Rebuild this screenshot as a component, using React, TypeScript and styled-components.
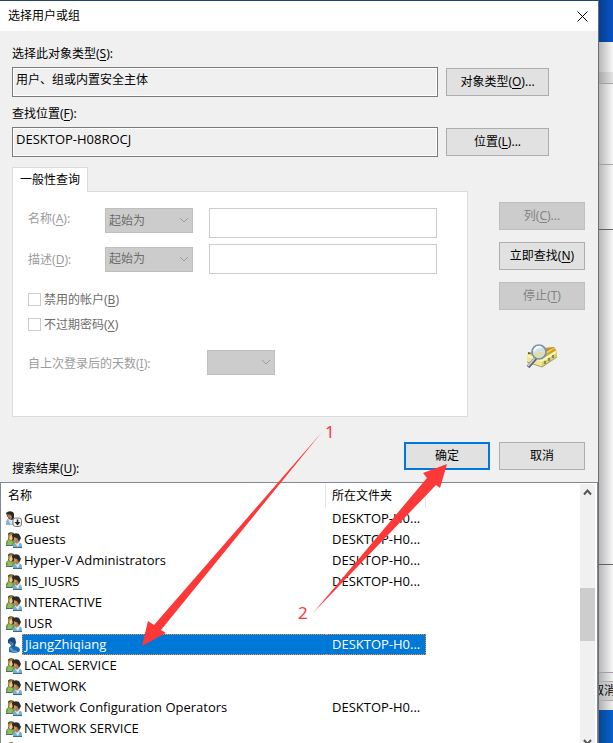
import React from "react";
import styled, { createGlobalStyle, css } from "styled-components";

const GlobalStyle = createGlobalStyle`
  *, *::before, *::after { box-sizing: border-box; }
  body {
    margin: 0;
    overflow: hidden;
    background: #f4f4f4;
    color: #000;
    font: 12px/18px "Noto Sans", "Noto Sans CJK SC", sans-serif;
  }
  button, input, select { font: inherit; color: inherit; margin: 0; border-radius: 0; }
  u { text-underline-offset: 2px; text-decoration-skip-ink: none; }
`;

const Desktop = styled.div`
  position: relative;
  display: grid;
  grid-template-columns: minmax(0, 1fr) 14px;
  height: 100vh;
`;

const Dialog = styled.main`
  display: flex;
  flex-direction: column;
  min-height: 0;
  background: #f0f0f0;
  border-top: 1px solid #1f4668;
  border-right: 1px solid #6b6f73;
`;

const TitleBar = styled.header`
  display: flex;
  align-items: center;
  justify-content: space-between;
  height: 30px;
  padding: 0 8px;
  background: #fff;
`;

const Title = styled.h1`
  margin: 0;
  font-size: 12px;
  font-weight: 400;
`;

const CloseButton = styled.button`
  display: flex;
  padding: 2px;
  border: 0;
  background: none;
`;

const Form = styled.form`
  display: flex;
  flex-direction: column;
  padding: 14px 13px 0 12px;
`;

const FieldGroup = styled.div`
  display: flex;
  flex-direction: column;
  gap: 4px;
  margin-bottom: 8px;
`;

const FieldRow = styled.div`
  display: flex;
  align-items: center;
  gap: 8px;
  padding-right: 36px;
`;

const ReadOnlyField = styled.input<{ $latin?: boolean }>`
  flex: 1;
  min-width: 0;
  height: 30px;
  padding: 0 3px 6px;
  border: 1px solid #7a7a7a;
  background: #f0f0f0;
  box-shadow: inset 0 0 0 1px #fff;
  outline: 0;
  ${(p) => p.$latin && css`font-family: "Open Sans", sans-serif; font-size: 13px;`}
`;

const PushButton = styled.button<{ $wide?: boolean; $primary?: boolean }>`
  flex: none;
  width: ${(p) => (p.$wide ? 103 : 86)}px;
  height: 28px;
  padding: 0;
  border: ${(p) => (p.$primary ? "2px solid #0078d7" : "1px solid #adadad")};
  background: #e1e1e1;
  &:disabled {
    color: #838383;
    background: #ccc;
    border-color: #bfbfbf;
  }
`;

const QueryArea = styled.div`
  display: flex;
  gap: 31px;
  margin-top: 2px;
`;

const TabBox = styled.div`
  display: flex;
  flex-direction: column;
  align-items: flex-start;
  flex: 1;
  min-width: 0;
`;

const Tab = styled.button`
  z-index: 1;
  height: 25px;
  margin-bottom: -1px;
  padding: 0 7px;
  border: 1px solid #dcdcdc;
  border-bottom: 0;
  background: #fff;
`;

const Panel = styled.div`
  align-self: stretch;
  padding: 16px 30px 41px 15px;
  border: 1px solid #dcdcdc;
  background: #fff;
  color: #9c9c9c;
`;

const Criteria = styled.div`
  display: flex;
  flex-direction: column;
  gap: 6px;
  margin-bottom: 13px;
`;

const CriteriaRow = styled.div<{ $align: "start" | "center" }>`
  display: grid;
  grid-template-columns: 61px 88px minmax(0, 1fr);
  column-gap: 16px;
  align-items: ${(p) => p.$align};
  & > label { padding-top: 2px; }
`;

const SelectBox = styled.div<{ $short?: boolean }>`
  position: relative;
  width: ${(p) => (p.$short ? 68 : 88)}px;
  height: 25px;
  svg { position: absolute; right: 4px; top: 9px; pointer-events: none; }
`;

const Select = styled.select`
  appearance: none;
  width: 100%;
  height: 100%;
  padding: 0 3px;
  border: 1px solid #bfbfbf;
  background: #ccc;
  &:disabled { color: #6d6d6d; opacity: 1; }
`;

const TextField = styled.input`
  width: 100%;
  height: 30px;
  padding: 0 4px;
  border: 1px solid #ccc;
  background: #fff;
`;

const CheckRow = styled.label`
  display: flex;
  align-items: center;
  gap: 3px;
  height: 25px;
  color: #6d6d6d;
`;

const CheckBox = styled.input`
  appearance: none;
  width: 13px;
  height: 13px;
  border: 1px solid #ccc;
  background: #fff;
`;

const DaysRow = styled.div`
  display: grid;
  grid-template-columns: 179px auto;
  align-items: center;
  margin-top: 13px;
  & > label { padding-top: 2px; }
`;

const Actions = styled.div`
  display: flex;
  flex-direction: column;
  align-items: center;
  gap: 12px;
  padding-top: 35px;
  svg { margin-top: 21px; }
`;

const FormFooter = styled.div`
  display: flex;
  align-items: flex-end;
  gap: 9px;
  padding-top: 25px;
`;

const ResultsTitle = styled.h2`
  flex: 1;
  margin: 0 0 4px;
  font-size: 12px;
  line-height: 18px;
  font-weight: 400;
`;

const ConfirmButton = styled(PushButton)`
  margin-bottom: 12px;
`;

const Results = styled.section`
  display: flex;
  flex: 1;
  min-height: 0;
  padding: 1px 2px 0 0;
  border: 1px solid #828790;
  border-bottom: 0;
  background: #fff;
  overflow: hidden;
`;

const TableArea = styled.div`
  flex: 1;
  overflow: hidden;
`;

const Table = styled.table`
  width: 100%;
  table-layout: fixed;
  border-collapse: separate;
  border-spacing: 0;
`;

const HeadCell = styled.th<{ $width?: number }>`
  ${(p) => p.$width && css`width: ${p.$width}px; border-right: 1px solid #e5e5e5;`}
  height: 24px;
  padding: 0 6px;
  font-weight: 400;
  text-align: left;
  &:first-child { padding-left: 7px; }
`;

const Cell = styled.td`
  height: 21px;
  padding: 0;
`;

const NameCell = styled.div`
  display: flex;
  align-items: center;
  padding-left: 5px;
`;

const CellText = styled.span<{ $selected?: boolean; $edge: "start" | "end" }>`
  display: block;
  flex: 1;
  height: 21px;
  font: 13px/19px "Open Sans", "Noto Sans CJK SC", sans-serif;
  white-space: nowrap;
  padding-left: ${(p) => (p.$edge === "start" ? 1 : 5)}px;
  border: 1px solid transparent;
  ${(p) =>
    p.$selected &&
    css`
      color: #fff;
      background: #0078d7;
      border: 1px dotted #f0914a;
      ${p.$edge === "start" ? "border-right: 0; padding-left: 2px;" : "border-left: 0; padding-left: 6px;"}
    `}
`;

const ScrollBar = styled.div`
  display: flex;
  flex-direction: column;
  align-items: center;
  width: 15px;
  background: #f0f0f0;
`;

const ScrollButton = styled.button<{ $overhang?: boolean }>`
  display: grid;
  place-items: center;
  flex: none;
  width: 15px;
  height: 17px;
  margin-bottom: ${(p) => (p.$overhang ? -8 : 0)}px;
  padding: 0;
  border: 0;
  background: none;
`;

const ScrollTrack = styled.div`
  flex: 1;
  width: 100%;
  padding-top: 87px;
`;

const ScrollThumb = styled.div`
  height: 53px;
  background: #cdcdcd;
`;

const Behind = styled.aside`
  display: flex;
  flex-direction: column;
  overflow: hidden;
`;

const Band = styled.div<{ $height?: number; $tone?: string; $line?: string }>`
  flex: ${(p) => (p.$height ? `0 0 ${p.$height}px` : "1")};
  background: linear-gradient(to right, #00000044, #00000000 14px), ${(p) => p.$tone || "#f8f8f8"};
  border-bottom: ${(p) => (p.$line ? `1px solid ${p.$line}` : "0")};
`;

const BehindButton = styled.button`
  flex: none;
  align-self: flex-end;
  width: 60px;
  height: 20px;
  margin-right: -3px;
  padding: 0;
  border: 1px solid #adadad;
  border-right: 0;
  background: linear-gradient(to right, #b8b8b8 43px, #e1e1e1);
  text-align: right;
`;

const Annotations = styled.svg`
  position: absolute;
  left: 0;
  top: 0;
  pointer-events: none;
  text { font: 17px "Noto Sans", sans-serif; }
`;

const Chevron = () => (
  <svg width="10" height="7" viewBox="0 0 10 7" fill="none" stroke="#9c9c9c">
    <path d="M1 1l4 4 4-4" />
  </svg>
);

const ScrollArrow = ({ down = false }: { down?: boolean }) => (
  <svg width="9" height="7" viewBox="0 0 9 7" fill="none" stroke="#555" strokeWidth="2">
    <path d={down ? "M1 1l3.500 4L8 1" : "M1 5.500l3.500-4L8 5.500"} />
  </svg>
);

const SearchIcon = () => (
  <svg width="34" height="26" viewBox="0 0 34 26">
    <path d="M2 11l14-6 13-1 3 4-16 9z" fill="#c9a33a" />
    <path d="M2 12l17-5 11-2-13 9z" fill="#ffcf3f" />
    <path d="M3 9l3 1-3 2z" fill="#5f5632" />
    <path d="M16 8l13-4-10 6z" fill="#ba851b" />
    <path d="M2 11l15 5v8L2 19z" fill="#ede895" />
    <path d="M17 16L32 7v7l-15 10z" fill="#d5cf75" />
    <path d="M2 11l15 5 15-9-1 3-14 9L3 14z" fill="#fbf5b6" />
    <path d="M2 19l15 5 15-10" fill="none" stroke="#a69e52" />
    <path d="M20 18v3m4-6v3m4-6v3" stroke="#777343" strokeWidth="1.500" />
    <path d="M21 17l1-1m3-2l1-1m3-2l1-1" stroke="#fffad0" />
    <path d="M3 24l8-9" stroke="#606475" strokeWidth="3.500" />
    <path d="M3 23l7-8" stroke="#d3d5df" strokeWidth="1.500" />
    <circle cx="14" cy="9" r="7" fill="#cfe8f6" fillOpacity=".92" stroke="#7b91ab" strokeWidth="1.700" />
    <path d="M8 11q6-3 12-2-1 5-6 6-4 0-6-4z" fill="#dddeb0" />
    <path d="M9 8q2-5 7-4" fill="none" stroke="#fff" strokeWidth="2" />
  </svg>
);

const GroupIcon = () => (
  <svg width="16" height="16" viewBox="0 0 16 16">
    <path d="M0 14V10q1-3 4-3h3l2 3v4z" fill="#6d9a41" />
    <path d="M2 9l2-2 3 3-2 4H1z" fill="#90bb60" />
    <path d="M2 1.500Q4-.5 8 1v7L5 9 2 7z" fill="#4f4125" />
    <path d="M3 3h3l1 3-2 3-2-2z" fill="#edc786" />
    <path d="M2 3l3-2 2 1-3 2-1 3-1-1z" fill="#ac8742" />
    <path d="M7 16v-3q1-3 4-3h2q3 1 3 4v2z" fill="#79add6" />
    <path d="M9 11l3 4 2-5" fill="#d9edf9" />
    <path d="M6 3q3-3 7-1l2 4-2 4-4-1-2-2z" fill="#292a29" />
    <path d="M8 5l3 1 2 3-2 3-3-3z" fill="#b77d4f" />
    <path d="M8 6l2 1-1 2z" fill="#e1ac7a" />
    <path d="M0 13.500h6M7 15.500h9" stroke="#426c7a" />
  </svg>
);

const UserIcon = () => (
  <svg width="16" height="16" viewBox="0 0 16 16">
    <path d="M3 15v-3q0-3 3-3h3q5 1 5 4l-1 2-5 1z" fill="#2168a9" />
    <path d="M2 3q2-4 7-2l1 4-1 4-3 1-2-3-2-1z" fill="#17477c" />
    <path d="M3 4l3 1 2 2-2 3-2-3z" fill="#3e82b7" />
    <path d="M4 11l3 3 4 1" fill="none" stroke="#5d9fd1" strokeWidth="2" />
  </svg>
);

const DisabledUserIcon = () => (
  <svg width="16" height="16" viewBox="0 0 16 16">
    <path d="M0 14v-3q1-4 4-4h3l3 4v3z" fill="#85b3d4" />
    <path d="M2 8l3 6 3-5" fill="#dceaf3" />
    <path d="M0 2q3-3 7-1l1 2v4L6 9 3 8 1 5z" fill="#262829" />
    <path d="M1 3l4 1 1 2-1 3-3-3z" fill="#ba7c51" />
    <rect x="7" y="7" width="8.500" height="8.500" rx="2.500" fill="#f5f5f5" stroke="#777" />
    <path d="M11.500 8.500v4" stroke="#222" strokeWidth="1.500" />
    <path d="M8.500 11h6l-3 3.500z" fill="#222" />
  </svg>
);

type Entry = { name: string; folder?: string; kind: "group" | "user" | "disabled" };

const FOLDER = "DESKTOP-H0...";

const ENTRIES: Entry[] = [
  { name: "Guest", folder: FOLDER, kind: "disabled" },
  { name: "Guests", folder: FOLDER, kind: "group" },
  { name: "Hyper-V Administrators", folder: FOLDER, kind: "group" },
  { name: "IIS_IUSRS", folder: FOLDER, kind: "group" },
  { name: "INTERACTIVE", kind: "group" },
  { name: "IUSR", kind: "group" },
  { name: "JiangZhiqiang", folder: FOLDER, kind: "user" },
  { name: "LOCAL SERVICE", kind: "group" },
  { name: "NETWORK", kind: "group" },
  { name: "Network Configuration Operators", folder: FOLDER, kind: "group" },
  { name: "NETWORK SERVICE", kind: "group" },
  { name: "", kind: "group" },
];

const ICONS = { group: GroupIcon, user: UserIcon, disabled: DisabledUserIcon };

function ResultRow({ entry }: { entry: Entry }) {
  const Icon = ICONS[entry.kind];
  const selected = entry.kind === "user";
  return (
    <tr aria-selected={selected}>
      <Cell>
        <NameCell>
          <Icon />
          <CellText $edge="start" $selected={selected}>{entry.name}</CellText>
        </NameCell>
      </Cell>
      <Cell>
        <CellText $edge="end" $selected={selected}>{entry.folder}</CellText>
      </Cell>
      <Cell />
    </tr>
  );
}

type ConditionProps = { id: string; label: string; hotkey: string; align: "start" | "center" };

function Condition({ id, label, hotkey, align }: ConditionProps) {
  return (
    <CriteriaRow $align={align}>
      <label htmlFor={id}>{label}(<u>{hotkey}</u>):</label>
      <SelectBox>
        <Select disabled aria-label={`${label}条件`}>
          <option>起始为</option>
        </Select>
        <Chevron />
      </SelectBox>
      <TextField id={id} disabled />
    </CriteriaRow>
  );
}

export default function App() {
  return (
    <>
      <GlobalStyle />
      <Desktop>
        <Dialog>
          <TitleBar>
            <Title>选择用户或组</Title>
            <CloseButton aria-label="关闭">
              <svg width="11" height="11" viewBox="0 0 11 11" stroke="#000">
                <path d="M.5.5l10 10M10.500.5l-10 10" />
              </svg>
            </CloseButton>
          </TitleBar>

          <Form onSubmit={(e) => e.preventDefault()}>
            <FieldGroup>
              <label htmlFor="types">选择此对象类型(<u>S</u>):</label>
              <FieldRow>
                <ReadOnlyField id="types" readOnly value="用户、组或内置安全主体" />
                <PushButton type="button" $wide>对象类型(<u>O</u>)...</PushButton>
              </FieldRow>
            </FieldGroup>
            <FieldGroup>
              <label htmlFor="place">查找位置(<u>F</u>):</label>
              <FieldRow>
                <ReadOnlyField id="place" $latin readOnly value="DESKTOP-H08ROCJ" />
                <PushButton type="button" $wide>位置(<u>L</u>)...</PushButton>
              </FieldRow>
            </FieldGroup>

            <QueryArea>
              <TabBox>
                <Tab type="button" role="tab" aria-selected>一般性查询</Tab>
                <Panel role="tabpanel">
                  <Criteria>
                    <Condition id="name" label="名称" hotkey="A" align="start" />
                    <Condition id="description" label="描述" hotkey="D" align="center" />
                  </Criteria>
                  <CheckRow>
                    <CheckBox type="checkbox" disabled />
                    <span>禁用的帐户(<u>B</u>)</span>
                  </CheckRow>
                  <CheckRow>
                    <CheckBox type="checkbox" disabled />
                    <span>不过期密码(<u>X</u>)</span>
                  </CheckRow>
                  <DaysRow>
                    <label htmlFor="days">自上次登录后的天数(<u>I</u>):</label>
                    <SelectBox $short>
                      <Select id="days" disabled />
                      <Chevron />
                    </SelectBox>
                  </DaysRow>
                </Panel>
              </TabBox>
              <Actions>
                <PushButton type="button" disabled>列(<u>C</u>)...</PushButton>
                <PushButton type="button">立即查找(<u>N</u>)</PushButton>
                <PushButton type="button" disabled>停止(<u>T</u>)</PushButton>
                <SearchIcon />
              </Actions>
            </QueryArea>

            <FormFooter>
              <ResultsTitle>搜索结果(<u>U</u>):</ResultsTitle>
              <ConfirmButton type="submit" $primary>确定</ConfirmButton>
              <ConfirmButton type="button">取消</ConfirmButton>
            </FormFooter>
          </Form>

          <Results>
            <TableArea>
              <Table>
                <thead>
                  <tr>
                    <HeadCell $width={325}>名称</HeadCell>
                    <HeadCell $width={100}>所在文件夹</HeadCell>
                    <HeadCell />
                  </tr>
                </thead>
                <tbody>
                  {ENTRIES.map((entry, i) => <ResultRow key={i} entry={entry} />)}
                </tbody>
              </Table>
            </TableArea>
            <ScrollBar>
              <ScrollButton aria-label="向上滚动"><ScrollArrow /></ScrollButton>
              <ScrollTrack><ScrollThumb /></ScrollTrack>
              <ScrollButton $overhang aria-label="向下滚动"><ScrollArrow down /></ScrollButton>
            </ScrollBar>
          </Results>
        </Dialog>

        <Behind>
          <Band $height={42} $tone="#0754c5" />
          <Band $height={30} />
          <Band $height={12} $tone="#e4e4e4" $line="#a0a0a0" />
          <Band $height={81} $line="#a0a0a0" />
          <Band $height={65} $line="#606060" />
          <Band $height={335} $line="#606060" />
          <Band $height={108} $line="#a0a0a0" />
          <Band $height={8} $tone="#f0f0f0" />
          <BehindButton>取消</BehindButton>
          <Band $height={9} $tone="#f0f0f0" />
          <Band $tone="#0761cc" />
        </Behind>

        <Annotations width="613" height="743" viewBox="0 0 613 743" fill="#fd3838">
          <path d="M322 432L154 625l-6-4-6 25 24-13-5-3z" />
          <path d="M313 613L427 478l-4-5 24-9-7 24-4-3z" />
          <text x="325" y="438">1</text>
          <text x="298" y="619">2</text>
        </Annotations>
      </Desktop>
    </>
  );
}
